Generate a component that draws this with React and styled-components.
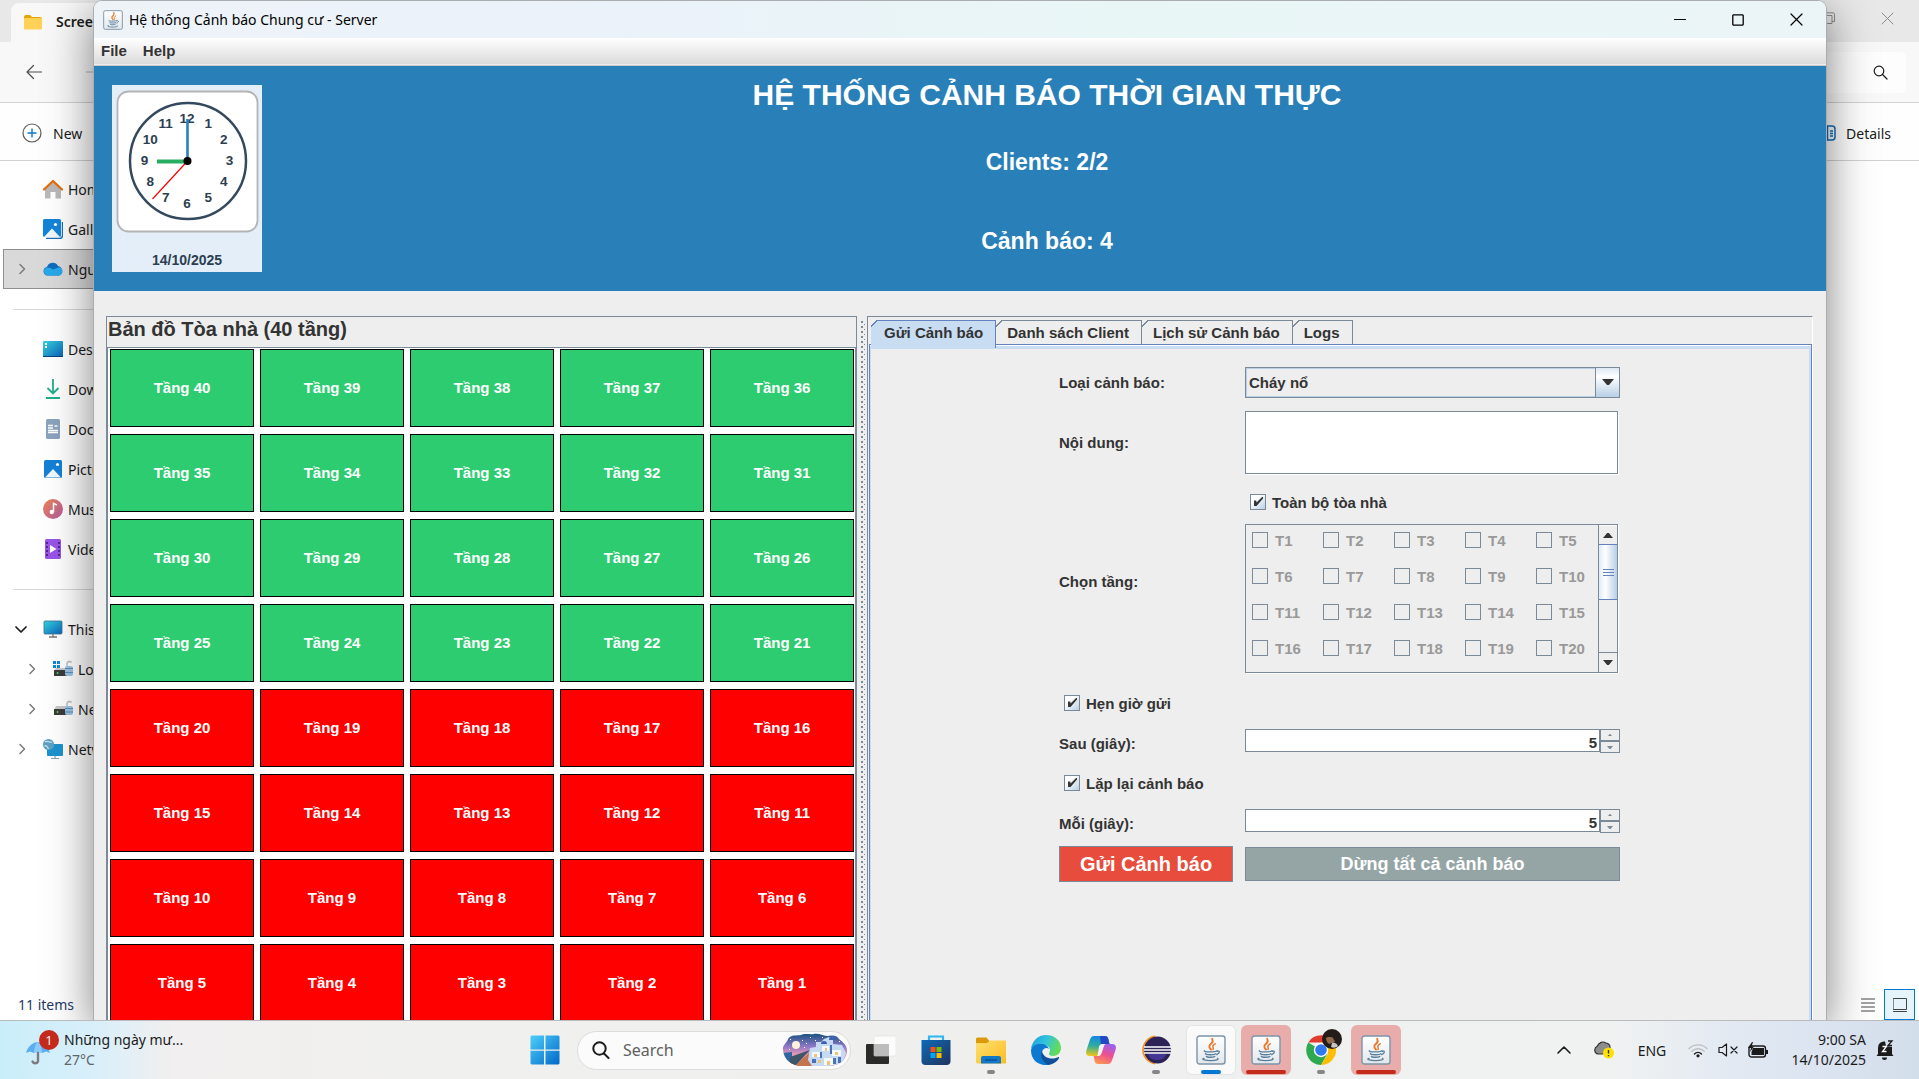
import React from 'react';
import styled, { createGlobalStyle } from 'styled-components';

const swing = `"Liberation Sans", Arial, sans-serif`;
const shell = `"Noto Sans", "Open Sans", sans-serif`;
const edge = '#7a8a99';
const blueEdge = '#6382bf';
const paleBlue = '#c8ddf2';

const GlobalStyle = createGlobalStyle`
  *, *::before, *::after { box-sizing: border-box; }
  body { margin: 0; overflow: hidden; }
  button, input, select, textarea { font: inherit; color: inherit; margin: 0; }
  button { border: 0; background: none; padding: 0; }
  svg { display: block; flex: none; }
`;

const Desktop = styled.div`
  height: 100vh;
  display: grid;
  grid-template-rows: minmax(0, 1fr) 59px;
  font-family: ${shell};
  font-size: 14px;
  color: #1b1b1b;
`;

const Workspace = styled.div`
  position: relative;
  overflow: hidden;
`;

/* ---------- File Explorer ---------- */

const Explorer = styled.section`
  height: 100%;
  display: flex;
  flex-direction: column;
  background: #fff;
  white-space: nowrap;
`;

const ExplorerTabs = styled.div`
  height: 42px;
  display: flex;
  align-items: flex-end;
  justify-content: space-between;
  padding: 0 2px 0 11px;
  background: #e8e8e8;
`;

const ExplorerTab = styled.div`
  width: 300px;
  height: 39px;
  display: flex;
  align-items: center;
  gap: 13px;
  padding: 0 12px 2px;
  border-radius: 8px 8px 0 0;
  background: #f8f8f8;
  font-weight: 600;
`;

const CaptionButtons = styled.div`
  height: ${(p) => p.$h}px;
  align-self: flex-start;
  display: flex;
  padding-right: 1px;
  color: ${(p) => p.$color};
`;

const CaptionButton = styled.button`
  width: 58px;
  height: 100%;
  display: grid;
  place-items: center;
`;

const AddressBar = styled.div`
  height: 61px;
  display: flex;
  align-items: center;
  justify-content: space-between;
  padding: 0 13px 0 26px;
  background: #f8f8f8;
  border-bottom: 1px solid #d2d2d2;
`;

const NavButtons = styled.div`
  display: flex;
  gap: 44px;
`;

const IconButton = styled.button`
  display: grid;
  place-items: center;
  color: ${(p) => p.$color || '#1b1b1b'};
`;

const SearchField = styled.button`
  width: 300px;
  height: 41px;
  display: flex;
  align-items: center;
  justify-content: flex-end;
  padding-right: 18px;
  border-radius: 5px;
  background: #fdfdfd;
`;

const CommandBar = styled.div`
  height: 58px;
  display: flex;
  align-items: center;
  justify-content: space-between;
  padding: 3px 28px 0 22px;
  background: #fefefe;
  border-bottom: 1px solid #d2d2d2;
`;

const Command = styled.button`
  display: flex;
  align-items: center;
  gap: ${(p) => p.$gap}px;
`;

const NavPane = styled.nav`
  flex: 1;
  width: 300px;
  padding-top: 8px;
`;

const NavItem = styled.a`
  height: 40px;
  display: flex;
  align-items: center;
  gap: 5px;
  margin-left: 3px;
  padding-left: ${(p) => (p.$nested ? 21 : 11)}px;
  color: inherit;
  text-decoration: none;
  border: 1px solid ${(p) => (p.$active ? '#8f8f8f' : 'transparent')};
  background: ${(p) => (p.$active ? '#d9d9d9' : 'transparent')};
`;

const ChevronSlot = styled.span`
  width: 23px;
  color: ${(p) => (p.$dark ? '#1b1b1b' : '#7a7a7a')};
`;

const NavDivider = styled.hr`
  height: 1px;
  margin: 20px 0 19px 13px;
  border: 0;
  background: #d8d8d8;
`;

const StatusBar = styled.div`
  height: 31px;
  display: flex;
  align-items: center;
  justify-content: space-between;
  padding: 0 4px 0 18px;
  color: #1e3a66;
`;

const ViewSwitch = styled.div`
  display: flex;
  align-items: center;
  gap: 1px;
  color: #444;
`;

const ViewButton = styled.button`
  width: 31px;
  height: 31px;
  display: grid;
  place-items: center;
  border: 1px solid ${(p) => (p.$active ? '#0078d4' : 'transparent')};
  background: ${(p) => (p.$active ? '#e5f3fb' : 'transparent')};
`;

/* ---------- Server window ---------- */

const ServerWindow = styled.section`
  position: absolute;
  inset: 0 92px 0 93px;
  display: flex;
  flex-direction: column;
  overflow: hidden;
  border: 1px solid #a9adb0;
  border-bottom: 0;
  border-radius: 9px 9px 0 0;
  background: #eee;
`;

const WindowShadow = styled.div`
  position: absolute;
  inset: 0 92px 0 93px;
  border-radius: 9px 9px 0 0;
  box-shadow: 0 12px 46px rgba(0, 0, 0, 0.5);
`;

const TitleBar = styled.div`
  flex: none;
  height: 37px;
  display: flex;
  align-items: center;
  justify-content: space-between;
  padding-left: 9px;
  background: linear-gradient(90deg, #eef3f8, #ebf2fa 25%, #e9f6f6 60%, #ebf5f8);
  color: #000;
`;

const TitleText = styled.div`
  display: flex;
  align-items: center;
  gap: 6px;
`;

const MenuBar = styled.div`
  flex: none;
  height: 28px;
  display: flex;
  align-items: center;
  gap: 16px;
  padding: 0 7px 2px;
  background: linear-gradient(#fff, #dadada);
  border-bottom: 1px solid #ccc;
  box-shadow: inset 0 -1px #eee;
  font: bold 15px ${swing};
  color: #333;
`;

const Header = styled.header`
  flex: none;
  height: 225px;
  display: flex;
  align-items: center;
  gap: 24px;
  padding: 0 18px;
  background: #2980b9;
  color: #fff;
  font-family: ${swing};
`;

const ClockCard = styled.div`
  width: 150px;
  height: 187px;
  display: flex;
  flex-direction: column;
  background: #e4eef9;
  color: #2c3e50;
  font: bold 14px/20px ${swing};
  text-align: center;
`;

const ClockDate = styled.time`
  padding-top: 13px;
`;

const HeaderText = styled.div`
  flex: 1;
  align-self: flex-start;
  display: grid;
  grid-template-rows: 34px 100px 58px;
  align-items: center;
  padding-top: 12px;
  text-align: center;
`;

const HeaderTitle = styled.h1`
  margin: 0;
  font-size: 30px;
  line-height: 34px;
`;

const HeaderStat = styled.div`
  font-size: 23px;
  font-weight: bold;
`;

const Main = styled.main`
  flex: 1;
  min-height: 0;
  display: flex;
  padding: 25px 13px 0 12px;
  overflow: hidden;
  font: bold 15px ${swing};
  color: #333;
`;

const MapPanel = styled.section`
  flex: 0 0 44%;
  border: 1px solid ${edge};
  border-bottom: 0;
`;

const MapTitle = styled.h2`
  height: 30px;
  margin: 0;
  padding: 0 1px;
  font-size: 20px;
  line-height: 24px;
`;

const FloorGrid = styled.div`
  display: grid;
  grid-template-columns: repeat(5, 1fr);
  grid-auto-rows: 78px;
  gap: 7px 6px;
  padding: 1px 1px 0 2px;
  border: 1px solid ${edge};
  border-bottom: 0;
  background: #fff;
`;

const Floor = styled.button`
  padding-bottom: 2px;
  border: 1px solid #000;
  background: ${(p) => (p.$alert ? '#f00' : '#2ecc71')};
  color: #fff;
`;

const Splitter = styled.div`
  flex: none;
  width: 10px;
  margin-top: 5px;
  background:
    repeating-linear-gradient(${edge} 0 2px, transparent 2px 5px) 4px 0 / 2px 100% no-repeat,
    repeating-linear-gradient(transparent 0 3px, ${edge} 3px 4px, transparent 4px 5px) 7px 0 / 1px 100% no-repeat;
`;

const TabbedPane = styled.section`
  flex: 1;
  display: flex;
  flex-direction: column;
  padding: 3px 0 0 1px;
  border: 1px solid ${edge};
  border-right-color: #fff;
  border-bottom: 0;
`;

const TabList = styled.div`
  height: 24px;
  display: flex;
  padding-left: 2px;
`;

const Tab = styled.button`
  position: relative;
  height: ${(p) => (p.$selected ? 28 : 24)}px;
  padding: ${(p) => (p.$selected ? '0 12px 3px 13px' : '0 12px 0 11px')};
  border-right: 1px solid ${(p) => (p.$selected ? blueEdge : edge)};
  background:
    linear-gradient(135deg, #eee 4px, ${(p) => (p.$selected ? blueEdge : edge)} 4px 5px, transparent 5px) 0 0 / 7px 7px no-repeat,
    linear-gradient(${(p) => (p.$selected ? blueEdge : edge)} 1px, transparent 1px) 6px 0 / 100% 100% no-repeat,
    ${(p) => (p.$selected ? paleBlue : '#eee')};
`;

const TabContent = styled.div`
  flex: 1;
  display: flex;
  justify-content: center;
  align-items: flex-start;
  padding: 15px 2px 0 0;
  border: solid ${blueEdge};
  border-width: 1px 1px 0;
  box-shadow: inset 0 1px #fff, inset 0 4px ${paleBlue}, inset 1px 0 ${paleBlue}, inset -2px 0 ${paleBlue};
`;

const AlertForm = styled.form`
  display: grid;
  grid-template-columns: 174px 375px;
  grid-template-rows: 44px 76px 203px 40px 40px 40px 40px 42px;
  gap: 0 12px;
  align-items: center;
`;

const ComboBox = styled.div`
  position: relative;
  height: 31px;
`;

const ComboSelect = styled.select`
  width: 100%;
  height: 100%;
  padding: 0 3px;
  appearance: none;
  border: 1px solid ${edge};
  border-radius: 0;
  background: #eee;
  box-shadow: inset 0 0 0 1px #b8cfe5;
  outline: 0;
`;

const ComboArrow = styled.span`
  position: absolute;
  inset: 0 0 0 auto;
  width: 25px;
  display: grid;
  place-items: center;
  border: 1px solid ${edge};
  background: linear-gradient(#dde8f3, #fff 30%, #b8cfe5);
  pointer-events: none;
`;

const MessageArea = styled.textarea`
  display: block;
  width: 373px;
  height: 63px;
  padding: 4px;
  border: 1px solid ${edge};
  background: #fff;
  box-shadow: 1px 1px #fff;
  resize: none;
  outline: 0;
`;

const FloorChoice = styled.div`
  height: 203px;
  display: flex;
  flex-direction: column;
`;

const CheckRow = styled.label`
  display: flex;
  align-items: center;
  gap: ${(p) => (p.$disabled ? 7 : 6)}px;
  height: ${(p) => (p.$disabled ? 16 : 44)}px;
  padding-left: ${(p) => (p.$disabled ? 0 : 5)}px;
  color: ${(p) => (p.$disabled ? '#999' : '#333')};
`;

const CheckBox = styled.input`
  width: 16px;
  height: 16px;
  appearance: none;
  border: 1px solid ${edge};
  background: ${(p) => (p.disabled ? '#eee' : 'linear-gradient(135deg, #fff 30%, #b8cfe5)')};
  &:checked::before {
    content: '';
    display: block;
    width: 9px;
    height: 9px;
    margin: 2px 0 0 3px;
    background: #333;
    clip-path: polygon(0 40%, 24% 40%, 28% 62%, 90% 0, 100% 0, 100% 16%, 28% 100%, 0 100%);
  }
`;

const FloorScroll = styled.div`
  width: 373px;
  height: 149px;
  display: flex;
  border: 1px solid ${edge};
  box-shadow: 1px 1px #fff;
`;

const FloorChecks = styled.div`
  flex: 1;
  display: grid;
  grid-template-columns: repeat(5, 71px);
  grid-auto-rows: 16px;
  align-content: start;
  row-gap: 20px;
  padding: 7px 0 0 6px;
  overflow: hidden;
`;

const ScrollBar = styled.div`
  width: 19px;
  display: grid;
  grid-template-rows: 19px 56px 1fr 20px;
  border-left: 1px solid ${edge};
`;

const ScrollArrow = styled.button`
  display: grid;
  place-items: center;
  border-top: 1px solid ${(p) => (p.$down ? edge : '#fff')};
`;

const ScrollThumb = styled.div`
  display: grid;
  place-items: center;
  border: solid ${blueEdge};
  border-width: 1px 0;
  background: linear-gradient(90deg, #dfeaf5, #fff 35%, #b8cfe5);
  color: ${blueEdge};
`;

const SpinnerWrap = styled.div`
  padding-bottom: 4px;
`;

const Spinner = styled.div`
  height: 24px;
  display: flex;
`;

const SpinnerInput = styled.input`
  flex: 1;
  min-width: 0;
  height: 23px;
  padding: 4px 2px 0;
  border: 1px solid ${edge};
  background: #fff;
  text-align: right;
  appearance: textfield;
  outline: 0;
  &::-webkit-inner-spin-button { appearance: none; }
`;

const SpinnerButtons = styled.div`
  width: 20px;
  display: grid;
  grid-template-rows: 1fr 1fr;
`;

const SpinnerButton = styled.button`
  display: grid;
  place-items: center;
  border: 1px solid ${edge};
`;

const ActionButton = styled.button`
  height: ${(p) => (p.$primary ? 36 : 34)}px;
  border: 1px solid ${edge};
  background: ${(p) => (p.$primary ? '#e74c3c' : '#95a5a6')};
  color: #fff;
  font-size: ${(p) => (p.$primary ? 20 : 18)}px;
`;

/* ---------- Taskbar ---------- */

const Taskbar = styled.footer`
  display: grid;
  grid-template-columns: 1fr auto 1fr;
  align-items: center;
  border-top: 1px solid #b9bbbd;
  background: linear-gradient(90deg, #c9eefa, #d9effa 5%, #f1efef 9%, #f0f0ee 22%, #efefef 60%, #f0f2f2 84%, #dfe7f2 92%, #d3deeb);
  white-space: nowrap;
`;

const Weather = styled.button`
  justify-self: start;
  display: flex;
  align-items: center;
  gap: 4px;
  padding-left: 24px;
  text-align: left;
  line-height: 20px;
`;

const Faint = styled.div`
  color: #5d666b;
`;

const TaskGroup = styled.div`
  display: flex;
  align-items: center;
  gap: 5px;
  padding-left: 2px;
`;

const StartSearch = styled.div`
  display: flex;
  align-items: center;
  gap: 7px;
`;

const Slot = styled.button`
  position: relative;
  width: 50px;
  height: 50px;
  display: grid;
  place-items: center;
  border-radius: 6px;
  background: ${(p) => ({ active: '#fafafa', alert: '#e8adaa' }[p.$state] || 'transparent')};
  box-shadow: ${(p) => (p.$state === 'active' ? 'inset 0 0 0 1px #e4e4e4' : 'none')};
  &::after {
    content: '';
    position: absolute;
    bottom: 1px;
    left: 50%;
    width: ${(p) => ({ active: 20, alert: 40, open: 8 }[p.$state] || 0)}px;
    height: 4px;
    border-radius: 2px;
    transform: translateX(-50%);
    background: ${(p) => ({ active: '#0078d4', alert: '#c42b1c' }[p.$state] || '#868686')};
  }
`;

const SearchPill = styled.label`
  width: 274px;
  height: 39px;
  display: flex;
  align-items: center;
  gap: 13px;
  padding: 0 2px 0 14px;
  border: 1px solid #dcdcdc;
  border-radius: 20px;
  background: #fbfbfb;
`;

const SearchInput = styled.input`
  flex: 1;
  min-width: 0;
  padding: 0;
  border: 0;
  outline: 0;
  background: none;
  font-size: 16px;
  &::placeholder { color: #606060; opacity: 1; }
`;

const Tray = styled.div`
  justify-self: end;
  display: flex;
  align-items: center;
  padding-right: 24px;
`;

const TrayItem = styled.button`
  width: ${(p) => p.$w}px;
  display: grid;
  place-items: center;
`;

const TrayClock = styled.button`
  width: 90px;
  margin-right: 9px;
  text-align: right;
  line-height: 20px;
`;

/* ---------- Drawings ---------- */

const Stroke = ({ w = 16, h = 16, box, d, sw = 1, children }) => (
  <svg width={w} height={h} viewBox={box || `0 0 ${w} ${h}`} fill="none" stroke="currentColor" strokeWidth={sw} strokeLinecap="round" strokeLinejoin="round">
    <path d={d} />
    {children}
  </svg>
);

const Chevron = ({ dir }) =>
  dir === 'down' ? <Stroke w={12} h={12} sw={1.7} d="M1 4l5 5 5-5" /> : <Stroke w={12} h={12} sw={1.5} d="M5 1.500l4.500 4.500-4.500 4.500" />;

const JavaIcon = ({ size = 30 }) => (
  <svg width={size} height={size} viewBox="0 0 30 30">
    <defs>
      <linearGradient id="javaTile" x1="0" y1="0" x2="0" y2="1">
        <stop offset="0" stopColor="#fff" />
        <stop offset="1" stopColor="#e3e7ea" />
      </linearGradient>
    </defs>
    <rect x="1" y="1" width="28" height="28" rx="2.5" fill="url(#javaTile)" stroke="#7c94a8" strokeWidth="1.4" />
    <g fill="none" strokeLinecap="round">
      <path d="M15 14.500c-3-3-1.500-4.500.5-6.200C17 7 17 5.500 16.200 3.800" stroke="#e8792b" strokeWidth="1.900" />
      <path d="M17 14.500c1-1.500-.8-2.300 0-3.700.5-.9 1.500-1.300 2.300-2" stroke="#e8792b" strokeWidth="1.500" />
      <path d="M8.500 15.800c-2 1.400 12 1.500 12.500-.2M9.500 18.500c-.8 1.500 9.500 1.600 10.200.2M10.500 21.300c-.4 1.300 7 1.300 8.200.2" stroke="#567f9e" strokeWidth="1.400" />
      <path d="M21 16.300c3-1 3.300 2-.3 3.400M8 23.300c-3.800 1 2 2.400 7 2.300 5 0 8.500-1.200 6.500-2.300" stroke="#567f9e" strokeWidth="1.300" />
    </g>
  </svg>
);

const FolderIcon = ({ w = 20, h = 16 }) => (
  <svg width={w} height={h} viewBox="0 0 20 16">
    <path d="M1 3a2 2 0 0 1 2-2h4l2 2h8a2 2 0 0 1 2 2v3H1z" fill="#e5a50a" />
    <rect x="1" y="4" width="18" height="11.500" rx="1" fill="#ffd257" />
  </svg>
);

const navIcons = {
  home: (
    <svg width="20" height="20" viewBox="0 0 20 20">
      <path d="M2 9l8-7 8 7v10.500h-5.500V13h-5v6.500H2z" fill="#b9b9bb" />
      <path d="M1 10.500L10 2l9 8.500" fill="none" stroke="#e2700f" strokeWidth="2.400" strokeLinejoin="round" strokeLinecap="round" />
    </svg>
  ),
  gallery: (
    <svg width="20" height="20" viewBox="0 0 20 20">
      <path d="M3 19.500h13.500c2 0 3-1 3-3V3" fill="none" stroke="#1a6fc0" strokeWidth="1.400" />
      <rect width="18" height="18" rx="1.500" fill="#1484d8" />
      <path d="M1 18l8-8.500 8 8.500z" fill="#f1f8fd" />
      <circle cx="12.500" cy="5.500" r="1.600" fill="#fff" />
    </svg>
  ),
  cloud: (
    <svg width="20" height="14" viewBox="0 0 20 14">
      <path d="M4.500 13.500A4.300 4.300 0 0 1 4 5a6 6 0 0 1 11-1 5 5 0 0 1 1 9.500z" fill="#0f6cbd" />
      <path d="M4.500 13.500A4.300 4.300 0 0 1 2 6.500c3-2 5-.8 8 1l6-2.300a4.200 4.200 0 0 1 0 8.300z" fill="#28a8ea" />
    </svg>
  ),
  desktop: (
    <svg width="20" height="16" viewBox="0 0 20 16">
      <defs>
        <linearGradient id="deskGrad" x1="0" y1="0" x2="1" y2="1">
          <stop offset="0" stopColor="#35d3e0" />
          <stop offset="1" stopColor="#0c62b8" />
        </linearGradient>
      </defs>
      <rect width="20" height="16" rx="1" fill="url(#deskGrad)" />
      <path d="M2 2h2v2H2zM2 5h2v2H2z" fill="#fff" />
      <path d="M0 15.500h20" stroke="#07427f" />
    </svg>
  ),
  download: (
    <svg width="20" height="20" viewBox="0 0 20 20" fill="none" stroke="#1fae8c" strokeWidth="1.800">
      <path d="M10 0v14M4.500 9l5.500 5.500L15.500 9M3 19h14" />
    </svg>
  ),
  document: (
    <svg width="20" height="20" viewBox="0 0 20 20">
      <rect x="3" width="14" height="20" rx="1.500" fill="#8ba3be" />
      <path d="M5 6.500h5M5 9h5M5 11.500h10M5 13.500h10M11.500 7h3" stroke="#fff" strokeWidth="1.300" />
    </svg>
  ),
  pictures: (
    <svg width="20" height="20" viewBox="0 0 20 20">
      <rect x="1" y="1" width="18" height="18" rx="1.500" fill="#1480d6" />
      <path d="M2 18.500l8-8.500 8 8.500z" fill="#f1f8fd" />
      <circle cx="14.500" cy="5.500" r="1.600" fill="#fff" />
    </svg>
  ),
  music: (
    <svg width="20" height="20" viewBox="0 0 20 20">
      <defs>
        <linearGradient id="musicGrad" x1="0" y1="0" x2="1" y2="1">
          <stop offset="0" stopColor="#ef8354" />
          <stop offset="1" stopColor="#b05ba0" />
        </linearGradient>
      </defs>
      <circle cx="10" cy="10" r="10" fill="url(#musicGrad)" />
      <circle cx="8.800" cy="13" r="2.200" fill="#fff" />
      <path d="M10.500 13V4.500l3.500 1.500" stroke="#fff" strokeWidth="1.500" fill="none" />
    </svg>
  ),
  videos: (
    <svg width="20" height="20" viewBox="0 0 20 20">
      <rect x="2" width="16" height="20" rx="1.500" fill="#9a55e8" />
      <path d="M4 3v14M16 3v14" stroke="#3f1a85" strokeWidth="1.600" strokeDasharray="2 2" />
      <path d="M7 6l6.500 4L7 14z" fill="#fff" />
    </svg>
  ),
  pc: (
    <svg width="20" height="18" viewBox="0 0 20 18">
      <rect x="1" y="1" width="18" height="13" rx="1" fill="url(#deskGrad)" stroke="#3c6f8c" strokeWidth=".8" />
      <path d="M10 14v2.500M6 17h8" stroke="#777" strokeWidth="1.300" />
    </svg>
  ),
  disk: (
    <svg width="20" height="18" viewBox="0 0 20 18">
      <path d="M0 1h3v3H0zM4 1h3v3H4zM0 5h3v3H0zM4 5h3v3H4z" fill="#0f87d8" />
      <path d="M3 8h12l4 3H1z" fill="#c8c8c8" />
      <rect x="1" y="10" width="14" height="6" fill="#3c3c3c" />
      <circle cx="4.500" cy="13" r=".9" fill="#4be05a" />
      <path d="M14 6V3.500a2.500 2.500 0 0 1 4.500-1" fill="none" stroke="#b6bcc2" strokeWidth="1.400" />
      <rect x="12" y="6" width="8" height="10" rx="2" fill="#9cc3e4" />
      <path d="M12 8.500h8M12 12.500h8" stroke="#5a8fbc" />
    </svg>
  ),
  drive: (
    <svg width="20" height="18" viewBox="0 0 20 18">
      <path d="M3 6h12l4 4H1z" fill="#c8c8c8" />
      <rect x="1" y="9" width="14" height="6" fill="#3c3c3c" />
      <circle cx="4.500" cy="12" r=".9" fill="#4be05a" />
      <path d="M14 6V3.500a2.500 2.500 0 0 1 4.500-1" fill="none" stroke="#b6bcc2" strokeWidth="1.400" />
      <rect x="12" y="6" width="8" height="9" rx="2" fill="#9cc3e4" />
      <path d="M12 8.500h8M12 12h8" stroke="#5a8fbc" />
    </svg>
  ),
  network: (
    <svg width="20" height="20" viewBox="0 0 20 20">
      <rect x="4" y="5" width="16" height="12" rx="1" fill="#1c93cf" />
      <path d="M12 17v2M8 19.500h8" stroke="#8aa0b0" strokeWidth="1.200" />
      <circle cx="5.500" cy="5.500" r="5.500" fill="#5f9fc4" />
      <path d="M2 3c3-2 5 1 7 0M1.500 7c2-1 3 1 4 3" stroke="#c6e2ef" fill="none" strokeWidth="1.300" />
    </svg>
  ),
};

const numerals = [12, 1, 2, 3, 4, 5, 6, 7, 8, 9, 10, 11];

const AnalogClock = () => (
  <svg width="150" height="152" viewBox="0 0 150 152" role="img" aria-label="9:00">
    <rect x="5.500" y="6.500" width="140" height="140" rx="11" fill="#fff" stroke="#b4b4b4" strokeWidth="1.800" />
    <circle cx="76" cy="76" r="58" fill="none" stroke="#34495e" strokeWidth="2.500" />
    <g fill="#2c3e50" fontFamily="Liberation Sans, Arial, sans-serif" fontWeight="bold" fontSize="13.500" textAnchor="middle">
      {numerals.map((n, i) => (
        <text key={n} x={75 + 42.5 * Math.sin((i * Math.PI) / 6)} y={80 - 42.5 * Math.cos((i * Math.PI) / 6)}>
          {n}
        </text>
      ))}
    </g>
    <path d="M75.500 76V34" stroke="#2980b9" strokeWidth="2.600" />
    <path d="M75.500 76.500H45" stroke="#27ae60" strokeWidth="4" />
    <path d="M75.500 76L40.500 114" stroke="#f00" strokeWidth="1.200" />
    <circle cx="75.500" cy="76" r="4" fill="#000" />
  </svg>
);

const Triangle = ({ up, w = 12, h = 6, color = '#333' }) => (
  <svg width={w} height={h} viewBox="0 0 12 6">
    <path d={up ? 'M0 6h12L7 0H5z' : 'M0 0h12L7 6H5z'} fill={color} />
  </svg>
);

const UmbrellaIcon = () => (
  <svg width="36" height="40" viewBox="0 0 36 40">
    <path d="M14 21v10.500a3 3 0 0 1-5.500 0" fill="none" stroke="#7c7c80" strokeWidth="2.400" strokeLinecap="round" />
    <path d="M2 23C4 16 9 12 14 12s10 4 12 11l-4-1.500-4 1.500-4-1.500-4 1.500-4-1.500z" fill="#5aaef2" />
    <path d="M10 23c0-5 2-10 4-11 2 1 4 6 4 11l-4-1.500z" fill="#8fcbfa" />
    <circle cx="25" cy="10" r="10" fill="#c42b1c" />
    <text x="25" y="15" fill="#fff" fontSize="13" textAnchor="middle" fontFamily="Open Sans, sans-serif">1</text>
  </svg>
);

const WindowsLogo = () => (
  <svg width="30" height="30" viewBox="0 0 30 30">
    <defs>
      <linearGradient id="winGrad" gradientUnits="userSpaceOnUse" x1="0" y1="0" x2="30" y2="30">
        <stop offset="0" stopColor="#4fd0fb" />
        <stop offset="1" stopColor="#0067c8" />
      </linearGradient>
    </defs>
    <path d="M1.500.5H14v14H.5v-13zM15.500.5h13l1 1v13h-14zM.5 15.800H14v13.700H1.500l-1-1zM15.500 15.800h14v12.700l-1 1h-13z" fill="url(#winGrad)" />
  </svg>
);

const SantoriniArt = () => (
  <svg width="66" height="34" viewBox="0 0 66 34">
    <defs>
      <linearGradient id="dusk" x1="0" y1="0" x2="0" y2="1">
        <stop offset="0" stopColor="#12507c" />
        <stop offset=".4" stopColor="#8f78c8" />
        <stop offset=".65" stopColor="#f09bb2" />
        <stop offset="1" stopColor="#b06a5e" />
      </linearGradient>
      <clipPath id="artClip">
        <path d="M1 17C0 12 5 10 6 6c3-5 9-3 13-4 4-2 9 0 13-1 5-1 9 2 13 2 5-1 10-1 12 3 4 3 9 7 8 14-2 8-9 13-18 13H20C10 33 2 27 1 17z" />
      </clipPath>
    </defs>
    <g clipPath="url(#artClip)">
      <rect width="66" height="34" fill="url(#dusk)" />
      <circle cx="14" cy="12" r="4" fill="#fff3d9" />
      <path d="M0 20l10-1v15H0z" fill="#2f66a4" />
      <path d="M8 24l20-7-16 17H8z" fill="#3f5568" />
      <path d="M12 34l16-15 6 15z" fill="#c2754e" />
      <path d="M28 15l6-1V9h5l3-3 5-2 4 3v4l9 1 4 8-4 12-14 3-16-2-4-6z" fill="#c6daf4" />
      <path d="M30 19h8v5h-8zM40 13h7v5h-7zM50 17h9v6h-9zM42 25h9v7h-9z" fill="#f4f8ff" />
      <path d="M32 21h3v3h-3zM43 15h2v3h-2zM53 19h3v3h-3zM45 28h3v4h-3zM36 27h3v3h-3z" fill="#f1c470" />
      <path d="M38 19h2v6h-2zM48 12h2v9h-2zM51 25h3v6h-3zM30 26h4v4h-4zM56 24h3v6h-3z" fill="#4a72b8" />
      <path d="M47 7a4 4 0 0 1 8 0zM39 11a3 3 0 0 1 6 0z" fill="#3d63ad" />
      <path d="M8 6h1v1H8zM20 7h1v1h-1zM28 4h1v1h-1zM33 7h1v1h-1zM24 10h1v1h-1zM40 4h1v1h-1zM7 16h1v1H7zM57 8h1v1h-1zM22 14h1v1h-1z" fill="#fff" />
    </g>
  </svg>
);

const TaskViewIcon = () => (
  <svg width="30" height="30" viewBox="0 0 30 30">
    <rect x="0" y="9" width="23" height="20" rx="1" fill="#2b2b29" />
    <rect x="8" y="1" width="22" height="20" rx="1" fill="#fff" fillOpacity=".78" stroke="#dedede" strokeWidth=".6" />
    <path d="M8 9h15v12H8z" fill="#bcbcbc" />
  </svg>
);

const StoreIcon = () => (
  <svg width="30" height="30" viewBox="0 0 30 30">
    <defs>
      <linearGradient id="storeGrad" x1="0" y1="0" x2="1" y2="1">
        <stop offset="0" stopColor="#0d6ab8" />
        <stop offset="1" stopColor="#21335c" />
      </linearGradient>
    </defs>
    <path d="M8 6V1.500h14V6" fill="none" stroke="#2bb8ee" strokeWidth="2.200" />
    <path d="M.5 5h29v21a4 4 0 0 1-4 4h-21a4 4 0 0 1-4-4z" fill="url(#storeGrad)" />
    <path d="M9.500 12h5v5h-5z" fill="#f25022" />
    <path d="M15.500 12h5v5h-5z" fill="#7fba00" />
    <path d="M9.500 18h5v5h-5z" fill="#00a4ef" />
    <path d="M15.500 18h5v5h-5z" fill="#ffb900" />
  </svg>
);

const ExplorerIcon = () => (
  <svg width="30" height="30" viewBox="0 0 30 30">
    <defs>
      <linearGradient id="folderGrad" x1="0" y1="0" x2="1" y2="1">
        <stop offset="0" stopColor="#ffdf70" />
        <stop offset="1" stopColor="#fcbc22" />
      </linearGradient>
    </defs>
    <path d="M0 4a1.500 1.500 0 0 1 1.500-1.500h9L13 5.500v3H0z" fill="#dc9a0b" />
    <path d="M0 8h11l3-2.500h16v23H1L0 27.500z" fill="url(#folderGrad)" />
    <path d="M5 28.500V23a2 2 0 0 1 2-2h16a2 2 0 0 1 2 2v5.500z" fill="#1278c8" />
    <path d="M9 25h12" stroke="#0b4a86" strokeWidth="1.200" />
  </svg>
);

const EdgeIcon = () => (
  <svg width="30" height="30" viewBox="0 0 30 30">
    <defs>
      <linearGradient id="edgeTop" x1="0" y1="0" x2="1" y2=".3">
        <stop offset="0" stopColor="#1b9fe0" />
        <stop offset=".55" stopColor="#34c4dc" />
        <stop offset="1" stopColor="#62dc58" />
      </linearGradient>
    </defs>
    <path d="M0 14C1 6 7 0 15 0c9 0 15 6 15 13 0 5-4 8-8 8-3 0-4-1-4-2.500 0-1 1-1.500 1-3.500 0-3-3-5-7-5C6 10 1 12 0 14z" fill="url(#edgeTop)" />
    <path d="M0 15C1 11 5 8.500 10 9c4 0 7 2 8 5-2-2-6-1-7 3-1 5 2 10 7 13-1 0-2 .2-3 .2C6 30 0 24 0 15z" fill="#0c7ad0" />
    <path d="M11 16c-2 3-1 10 6 14 5-.5 9-3 11-7 .3-1-.5-1.200-1-.8-6 3-15 1-16-6.200z" fill="#124f9a" />
  </svg>
);

const CopilotIcon = () => (
  <svg width="30" height="30" viewBox="0 0 30 30">
    <defs>
      <linearGradient id="copLeft" x1=".4" y1="0" x2=".3" y2="1">
        <stop offset="0" stopColor="#1488e4" />
        <stop offset=".5" stopColor="#2fae9d" />
        <stop offset="1" stopColor="#f2c615" />
      </linearGradient>
      <linearGradient id="copRight" x1=".7" y1="0" x2=".3" y2="1">
        <stop offset="0" stopColor="#9b62f0" />
        <stop offset=".5" stopColor="#ee4f92" />
        <stop offset="1" stopColor="#fb9553" />
      </linearGradient>
    </defs>
    <path d="M8 1h11c3 0 3.500 3 4 6l.5 2h-5c-2 0-3 1-4 4l-2 6c-.6 1.500-1 2-3 2H4c-4 0-4.500-3-3.500-6L4 4.500C5 2 6 1 8 1z" fill="url(#copLeft)" />
    <path d="M14 1h5c3 0 3.500 3 4 6l.5 2h-5c-1.500 0-2.500.5-3.500 2z" fill="#2547c4" />
    <path d="M22 29H12c-3 0-3.500-3-4-6l-.5-2H12c2 0 3-1 4-4l2-6c.6-1.500 1-2 3-2h5c4 0 4.500 3 3.500 6L26 25.500c-1 2.500-2 3.500-4 3.500z" fill="url(#copRight)" />
    <path d="M13 11.500c1-2 2-2.500 4-2.500h1l-3 9c-.6 1.800-1.500 2.500-3 3h-.5z" fill="#f5f3f4" />
  </svg>
);

const EclipseIcon = () => (
  <svg width="30" height="30" viewBox="0 0 30 30">
    <path d="M14 1.500a13.600 13.600 0 0 0 0 27" fill="none" stroke="#f7941e" strokeWidth="1.800" />
    <circle cx="16.500" cy="15" r="13.500" fill="#2c2255" />
    <path d="M7 19h18c-1 5-5 6-9 6s-8-2-9-6z" fill="#443694" />
    <path d="M3 12h27M3 15h27M3 18h27" stroke="#fff" strokeWidth="1.400" />
  </svg>
);

const ChromeIcon = () => (
  <svg width="30" height="30" viewBox="0 6 30 30" overflow="visible">
    <path d="M2.200 13.500A15 15 0 0 1 28 13.500H15z" fill="#e33b2e" />
    <path d="M2.200 13.500A15 15 0 0 0 15 36l6.500-11.500L15 21z" fill="#2da94f" />
    <path d="M15 13.500h13A15 15 0 0 1 15 36l7-11.500z" fill="#fdbd00" />
    <circle cx="15" cy="21" r="7.200" fill="#fff" />
    <circle cx="15" cy="21" r="5.800" fill="#3079ee" />
    <circle cx="26" cy="10" r="10" fill="#241c18" />
    <path d="M20 9c3-2 5 0 6-1 2 1 1 3 3 4-1 3-4 1-5 3-2 0-4-3-4-6z" fill="#8f6b50" />
    <path d="M26 14c2-1 5 0 6 3-2 2-5 2-7 1z" fill="#c8c4c2" />
  </svg>
);

/* ---------- Data ---------- */

const quickAccess = [
  ['desktop', 'Desktop'],
  ['download', 'Downloads'],
  ['document', 'Documents'],
  ['pictures', 'Pictures'],
  ['music', 'Music'],
  ['videos', 'Videos'],
];

const floors = Array.from({ length: 40 }, (_, i) => 40 - i);
const tabs = ['Gửi Cảnh báo', 'Danh sách Client', 'Lịch sử Cảnh báo', 'Logs'];

const NavEntry = ({ icon, label, chevron, nested, active }) => (
  <NavItem href="#" $nested={nested} $active={active}>
    <ChevronSlot $dark={chevron === 'down'}>{chevron && <Chevron dir={chevron} />}</ChevronSlot>
    {navIcons[icon]}
    {label}
  </NavItem>
);

const FileExplorer = () => (
  <Explorer>
    <ExplorerTabs>
      <ExplorerTab>
        <FolderIcon />
        Screen
      </ExplorerTab>
      <CaptionButtons $color="#8b8b8b" $h={36}>
        <CaptionButton aria-label="Restore">
          <Stroke w={12} h={12} d="M1 3.500h8v8H1zM3.500 3V.8H10a1.500 1.500 0 0 1 1.500 1.500V9.500H9.500" />
        </CaptionButton>
        <CaptionButton aria-label="Close">
          <Stroke w={13} h={13} d="M1 1l11 11M12 1L1 12" />
        </CaptionButton>
      </CaptionButtons>
    </ExplorerTabs>
    <AddressBar>
      <NavButtons>
        <IconButton aria-label="Back" $color="#4c4c4c">
          <Stroke w={16} h={16} sw={1.2} d="M15.500 8H1M7.500 1.500L1 8l6.500 6.500" />
        </IconButton>
        <IconButton aria-label="Forward" $color="#b5b5b5">
          <Stroke w={16} h={16} sw={1.2} d="M.5 8H15M8.500 1.500L15 8l-6.500 6.500" />
        </IconButton>
      </NavButtons>
      <SearchField aria-label="Search folder">
        <Stroke w={15} h={15} sw={1.2} d="M9.500 9.500l4.500 4.500">
          <circle cx="6" cy="6" r="4.800" />
        </Stroke>
      </SearchField>
    </AddressBar>
    <CommandBar>
      <Command $gap={11}>
        <svg width="20" height="20" viewBox="0 0 20 20" fill="none">
          <circle cx="10" cy="10" r="9" stroke="#5a5a5a" strokeWidth="1.200" />
          <path d="M10 5.500v9M5.500 10h9" stroke="#0a78d0" strokeWidth="1.400" />
        </svg>
        New
        <Stroke w={10} h={10} d="M1 3l4 4 4-4" />
      </Command>
      <Command $gap={10}>
        <svg width="20" height="16" viewBox="0 0 20 16" fill="none" stroke="#0f6cbd" strokeWidth="1.500">
          <rect x="1" y="1" width="18" height="14" rx="3" />
          <path d="M11.500 1v14M14 6h3M14 8.500h3M14 11h3" />
        </svg>
        Details
      </Command>
    </CommandBar>
    <NavPane>
      <NavEntry icon="home" label="Home" />
      <NavEntry icon="gallery" label="Gallery" />
      <NavEntry icon="cloud" label="Nguyen" chevron="right" active />
      <NavDivider />
      {quickAccess.map(([icon, label]) => (
        <NavEntry key={label} icon={icon} label={label} />
      ))}
      <NavDivider />
      <NavEntry icon="pc" label="This PC" chevron="down" />
      <NavEntry icon="disk" label="Local Disk" chevron="right" nested />
      <NavEntry icon="drive" label="New Volume" chevron="right" nested />
      <NavEntry icon="network" label="Network" chevron="right" />
    </NavPane>
    <StatusBar>
      11 items
      <ViewSwitch>
        <ViewButton aria-label="Details view">
          <Stroke w={14} h={14} d="M.5 1h13M.5 5h13M.5 9h13M.5 13h13" />
        </ViewButton>
        <ViewButton aria-label="Large icons" $active>
          <Stroke w={14} h={14} d="M.5.5h13v11H.5zM.5 13.500h13" />
        </ViewButton>
      </ViewSwitch>
    </StatusBar>
  </Explorer>
);

const SecondsSpinner = ({ id }) => (
  <SpinnerWrap>
    <Spinner>
      <SpinnerInput id={id} type="number" defaultValue={5} />
      <SpinnerButtons>
        <SpinnerButton type="button" aria-label="Increase">
          <Triangle up w={4} h={2} color={edge} />
        </SpinnerButton>
        <SpinnerButton type="button" aria-label="Decrease">
          <Triangle w={6} h={3} color={edge} />
        </SpinnerButton>
      </SpinnerButtons>
    </Spinner>
  </SpinnerWrap>
);

const AlertSender = () => (
  <AlertForm>
    <label htmlFor="kind">Loại cảnh báo:</label>
    <ComboBox>
      <ComboSelect id="kind">
        <option>Cháy nổ</option>
      </ComboSelect>
      <ComboArrow>
        <Triangle w={14} />
      </ComboArrow>
    </ComboBox>

    <label htmlFor="message">Nội dung:</label>
    <MessageArea id="message" />

    <span>Chọn tầng:</span>
    <FloorChoice>
      <CheckRow>
        <CheckBox type="checkbox" defaultChecked />
        Toàn bộ tòa nhà
      </CheckRow>
      <FloorScroll>
        <FloorChecks>
          {Array.from({ length: 20 }, (_, i) => (
            <CheckRow key={i} $disabled>
              <CheckBox type="checkbox" disabled />T{i + 1}
            </CheckRow>
          ))}
        </FloorChecks>
        <ScrollBar>
          <ScrollArrow type="button" aria-label="Scroll up">
            <Triangle up w={10} h={5} />
          </ScrollArrow>
          <ScrollThumb>
            <Stroke w={11} h={7} d="M0 .5h11M0 3.500h11M0 6.500h11" />
          </ScrollThumb>
          <span />
          <ScrollArrow type="button" aria-label="Scroll down" $down>
            <Triangle w={10} h={5} />
          </ScrollArrow>
        </ScrollBar>
      </FloorScroll>
    </FloorChoice>

    <CheckRow>
      <CheckBox type="checkbox" defaultChecked />
      Hẹn giờ gửi
    </CheckRow>
    <span />
    <label htmlFor="delay">Sau (giây):</label>
    <SecondsSpinner id="delay" />

    <CheckRow>
      <CheckBox type="checkbox" defaultChecked />
      Lặp lại cảnh báo
    </CheckRow>
    <span />
    <label htmlFor="interval">Mỗi (giây):</label>
    <SecondsSpinner id="interval" />

    <ActionButton type="button" $primary>Gửi Cảnh báo</ActionButton>
    <ActionButton type="button">Dừng tất cả cảnh báo</ActionButton>
  </AlertForm>
);

const Server = () => (
  <ServerWindow>
    <TitleBar>
      <TitleText>
        <JavaIcon size={20} />
        Hệ thống Cảnh báo Chung cư - Server
      </TitleText>
      <CaptionButtons $color="#000" $h={37}>
        <CaptionButton aria-label="Minimize">
          <Stroke w={12} h={12} d="M.5 5.500h11" />
        </CaptionButton>
        <CaptionButton aria-label="Maximize">
          <Stroke w={12} h={12} sw={1.3} d="M1.500.8h9l.7.7v9l-.7.7h-9l-.7-.7v-9z" />
        </CaptionButton>
        <CaptionButton aria-label="Close">
          <Stroke w={13} h={13} sw={1.2} d="M1 1l11 11M12 1L1 12" />
        </CaptionButton>
      </CaptionButtons>
    </TitleBar>
    <MenuBar>
      <button>File</button>
      <button>Help</button>
    </MenuBar>
    <Header>
      <ClockCard>
        <AnalogClock />
        <ClockDate>14/10/2025</ClockDate>
      </ClockCard>
      <HeaderText>
        <HeaderTitle>HỆ THỐNG CẢNH BÁO THỜI GIAN THỰC</HeaderTitle>
        <HeaderStat>Clients: 2/2</HeaderStat>
        <HeaderStat>Cảnh báo: 4</HeaderStat>
      </HeaderText>
    </Header>
    <Main>
      <MapPanel>
        <MapTitle>Bản đồ Tòa nhà (40 tầng)</MapTitle>
        <FloorGrid>
          {floors.map((n) => (
            <Floor key={n} $alert={n <= 20}>Tầng {n}</Floor>
          ))}
        </FloorGrid>
      </MapPanel>
      <Splitter />
      <TabbedPane>
        <TabList role="tablist">
          {tabs.map((name, i) => (
            <Tab key={name} role="tab" aria-selected={i === 0} $selected={i === 0}>{name}</Tab>
          ))}
        </TabList>
        <TabContent>
          <AlertSender />
        </TabContent>
      </TabbedPane>
    </Main>
  </ServerWindow>
);

const WindowsTaskbar = () => (
  <Taskbar>
    <Weather>
      <UmbrellaIcon />
      <div>
        Những ngày mư...
        <Faint>27°C</Faint>
      </div>
    </Weather>
    <TaskGroup>
      <StartSearch>
        <Slot aria-label="Start"><WindowsLogo /></Slot>
        <SearchPill>
          <Stroke w={18} h={18} sw={2} d="M12 12.500l4.500 4.500">
            <circle cx="7.500" cy="7.500" r="6.200" />
          </Stroke>
          <SearchInput placeholder="Search" aria-label="Search" />
          <SantoriniArt />
        </SearchPill>
      </StartSearch>
      <Slot aria-label="Task view"><TaskViewIcon /></Slot>
      <Slot aria-label="Store"><StoreIcon /></Slot>
      <Slot aria-label="File Explorer" $state="open"><ExplorerIcon /></Slot>
      <Slot aria-label="Edge"><EdgeIcon /></Slot>
      <Slot aria-label="Copilot"><CopilotIcon /></Slot>
      <Slot aria-label="Eclipse" $state="open"><EclipseIcon /></Slot>
      <Slot aria-label="Java server" $state="active"><JavaIcon /></Slot>
      <Slot aria-label="Java client 1" $state="alert"><JavaIcon /></Slot>
      <Slot aria-label="Chrome" $state="open"><ChromeIcon /></Slot>
      <Slot aria-label="Java client 2" $state="alert"><JavaIcon /></Slot>
    </TaskGroup>
    <Tray>
      <TrayItem $w={40} aria-label="Hidden icons">
        <Stroke w={14} h={8} sw={1.6} d="M1 7l6-6 6 6" />
      </TrayItem>
      <TrayItem $w={40} aria-label="OneDrive">
        <svg width="20" height="18" viewBox="0 0 20 18">
          <path d="M4 13a4 4 0 0 1-1-7.500C5 1 9 0 12 2c2 .3 4 2 4 4.500V13z" fill="#8d8d8d" stroke="#333" strokeWidth="1.200" />
          <circle cx="14.500" cy="12" r="5.500" fill="#ffe100" />
          <path d="M14.500 9v3.500M14.500 14v1.300" stroke="#333" strokeWidth="1.400" />
        </svg>
      </TrayItem>
      <TrayItem $w={56}>ENG</TrayItem>
      <TrayItem $w={36} aria-label="Wi-Fi">
        <svg width="20" height="15" viewBox="0 0 20 15" fill="none" strokeWidth="1.400" strokeLinecap="round">
          <path d="M1 5.500a13 13 0 0 1 18 0M3.800 8.300a9 9 0 0 1 12.400 0" stroke="#bdbfc2" />
          <path d="M6.500 11a5 5 0 0 1 7 0" stroke="#1b1b1b" />
          <circle cx="10" cy="12.800" r="1.600" fill="#1b1b1b" />
        </svg>
      </TrayItem>
      <TrayItem $w={24} aria-label="Volume muted">
        <Stroke w={20} h={14} sw={1.2} d="M1 4.500h3L8.500 1v12L4 9.500H1zM13 4l6 6M19 4l-6 6" />
      </TrayItem>
      <TrayItem $w={36} aria-label="Battery">
        <svg width="20" height="16" viewBox="0 0 20 16">
          <rect x="1" y="4" width="16.500" height="11" rx="2.500" fill="none" stroke="#1b1b1b" strokeWidth="1.400" />
          <path d="M5 6h11v7H3.500v-3zM18 8h2v4h-2z" fill="#1b1b1b" />
          <path d="M4 0L0 6h3L2 10l4-5.500H3.500L5 0z" fill="#1b1b1b" />
        </svg>
      </TrayItem>
      <TrayClock>
        9:00 SA
        <div>14/10/2025</div>
      </TrayClock>
      <TrayItem $w={20} aria-label="Do not disturb">
        <svg width="18" height="20" viewBox="0 0 18 20">
          <path d="M2 14V8a6 6 0 0 1 7-6.500L10 6l6 1v7l1.500 2H.5zM6 17.500h5a2.500 2.500 0 0 1-5 0z" fill="#1b1b1b" />
          <path d="M6.500 6.500h4L6.500 11.500h4" stroke="#fff" strokeWidth="1.300" fill="none" />
          <path d="M12 1h4l-4 4.500h4" stroke="#1b1b1b" strokeWidth="1.300" fill="none" />
        </svg>
      </TrayItem>
    </Tray>
  </Taskbar>
);

export default function App() {
  return (
    <Desktop>
      <GlobalStyle />
      <Workspace>
        <FileExplorer />
        <WindowShadow />
        <Server />
      </Workspace>
      <WindowsTaskbar />
    </Desktop>
  );
}
